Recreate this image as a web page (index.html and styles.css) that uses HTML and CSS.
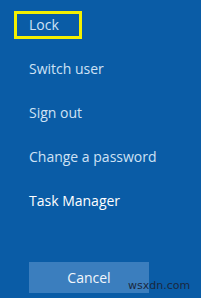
FILE: index.html
```html
<!DOCTYPE html>
<html lang="en">
<head>
<meta charset="UTF-8">
<title>Ctrl Alt Del</title>
<link rel="stylesheet" href="styles.css">
</head>
<body>

<div class="screen">
    <ul class="options">
        <li class="item marked">Lock</li>
        <li class="item">Switch user</li>
        <li class="item">Sign out</li>
        <li class="item">Change a password</li>
        <li class="item bright">Task Manager</li>
    </ul>

    <div class="bottom">
        <button class="cancel">Cancel</button>
    </div>

    <span class="mark">wsxdn.com</span>
</div>

</body>
</html>
```

FILE: styles.css
```css
body{
    margin:0;
    background:#0a5ca6;
    font-family:"Open Sans", "Noto Sans", sans-serif;
}

.screen{
    position:relative;
    width:201px;
    height:298px;
    display:flex;
    flex-direction:column;
    overflow:hidden;
}

.options{
    list-style:none;
    margin:0;
    padding:11px 0 0 14px;
}

.item{
    color:#cfe2f5;
    font-size:14px;
    line-height:22px;
    height:28px;
    padding-left:12px;
    margin-bottom:16px;
    border:3px solid transparent;
    box-sizing:border-box;
    width:68px;
    white-space:nowrap;
}

.item.marked{
    border-color:#f4f000;
}

.item.bright{
    color:#fff;
}

.bottom{
    margin-top:auto;
    padding:0 0 5px 29px;
}

.cancel{
    width:120px;
    height:31px;
    background:#3b7ebe;
    color:#f2f7fc;
    border:none;
    font-family:inherit;
    font-size:14px;
    padding:0;
    display:block;
}

.mark{
    position:absolute;
    left:128px;
    top:279px;
    color:#1a2840;
    font-family:"DejaVu Sans", sans-serif;
    font-size:11px;
}
```
